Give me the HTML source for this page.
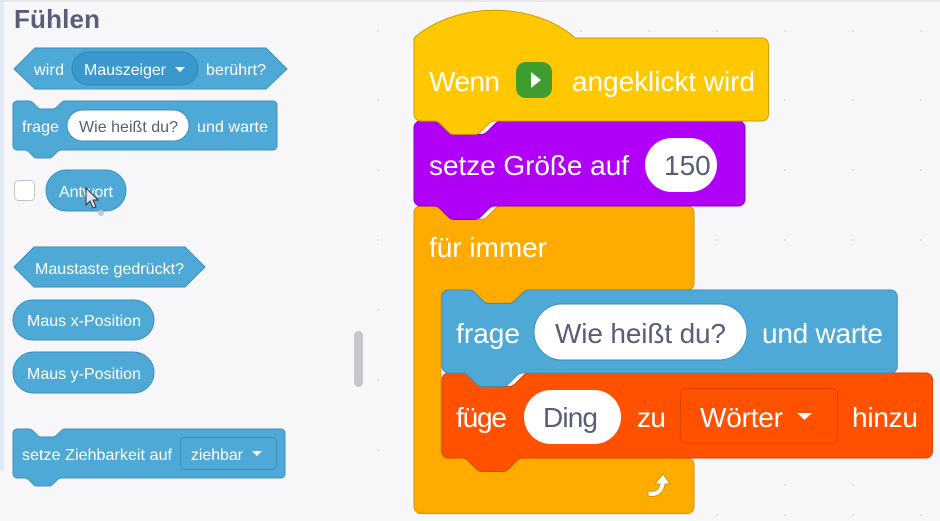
<!DOCTYPE html>
<html><head><meta charset="utf-8"><style>
html,body{margin:0;padding:0;width:940px;height:521px;overflow:hidden;background:#f7f7f9;}
svg{position:absolute;left:0;top:0}
text{font-family:"Liberation Sans",sans-serif;}
</style></head><body>
<svg width="940" height="521" viewBox="0 0 940 521">
<rect x="0" y="0" width="940" height="521" fill="#f7f7f9"/>
<rect x="0" y="0" width="940" height="2" fill="#e6e6ea"/>
<rect x="0" y="2" width="4" height="468" fill="#e1e9f4"/>
<rect x="354" y="331" width="9" height="56" rx="4.5" fill="#c6c6ca"/>
<text x="14" y="28" font-size="26" font-weight="bold" fill="#575e75" textLength="86">Fühlen</text>

<path d="M14,69 L35,48 H266 L287,69 L266,89 H35 Z" fill="#4fa9d6" stroke="#3d8fbd"/>
<text x="34" y="75" font-size="16" fill="#fff" textLength="30">wird</text>
<rect x="72" y="52" width="126" height="33" rx="16.5" fill="#3a98cc" stroke="#2f86b8"/>
<text x="84" y="75" font-size="16" fill="#fff" textLength="82">Mauszeiger</text>
<path d="M175,67 h10 l-5,5 z" fill="#fff"/>
<text x="206" y="75" font-size="16" fill="#fff" textLength="60">berührt?</text>

<g transform="translate(13,101)">
<path d="M0,4 A4,4 0 0 1 4,0 H16 c2,0 3,1 4,2 l4,4 c1,1 2,2 4,2 h12 c2,0 3,-1 4,-2 l4,-4 c1,-1 2,-2 4,-2 H260 a4,4 0 0 1 4,4 V45 a4,4 0 0 1 -4,4 H48 c-2,0 -3,1 -4,2 l-4,4 c-1,1 -2,2 -4,2 h-12 c-2,0 -3,-1 -4,-2 l-4,-4 c-1,-1 -2,-2 -4,-2 H4 a4,4 0 0 1 -4,-4 Z" fill="#4fa9d6" stroke="#3d8fbd"/>
</g>
<text x="22" y="132" font-size="16" fill="#fff" textLength="37">frage</text>
<rect x="67" y="110" width="122" height="31" rx="15.5" fill="#fff" stroke="#3d8fbd"/>
<text x="79" y="132" font-size="16" fill="#575e75" textLength="99">Wie heißt du?</text>
<text x="197" y="132" font-size="16" fill="#fff" textLength="71">und warte</text>

<rect x="14.5" y="180.5" width="20" height="20" rx="4" fill="#fff" stroke="#c4c4c8"/>
<rect x="46" y="170" width="80" height="41" rx="20.5" fill="#4fa9d6" stroke="#3d8fbd"/>
<text x="59" y="197" font-size="16" fill="#fff" textLength="54">Antwort</text>
<path d="M86,188 v17 l4,-4 l3,7 l3,-1 l-3,-7 l5,0 z" fill="#dfe6ee" stroke="#333" stroke-width="1"/>
<circle cx="101" cy="213" r="3" fill="#c8c8cc"/>

<path d="M14,267 L34,247 H185 L205,267 L185,287 H34 Z" fill="#4fa9d6" stroke="#3d8fbd"/>
<text x="35" y="274" font-size="16" fill="#fff" textLength="149">Maustaste gedrückt?</text>
<rect x="13" y="300" width="141" height="40" rx="20" fill="#4fa9d6" stroke="#3d8fbd"/>
<text x="27" y="326" font-size="16" fill="#fff" textLength="114">Maus x-Position</text>
<rect x="13" y="352" width="141" height="41" rx="20.5" fill="#4fa9d6" stroke="#3d8fbd"/>
<text x="27" y="379" font-size="16" fill="#fff" textLength="114">Maus y-Position</text>

<g transform="translate(13,429)">
<path d="M0,4 A4,4 0 0 1 4,0 H16 c2,0 3,1 4,2 l4,4 c1,1 2,2 4,2 h12 c2,0 3,-1 4,-2 l4,-4 c1,-1 2,-2 4,-2 H268 a4,4 0 0 1 4,4 V45 a4,4 0 0 1 -4,4 H48 c-2,0 -3,1 -4,2 l-4,4 c-1,1 -2,2 -4,2 h-12 c-2,0 -3,-1 -4,-2 l-4,-4 c-1,-1 -2,-2 -4,-2 H4 a4,4 0 0 1 -4,-4 Z" fill="#4fa9d6" stroke="#3d8fbd"/>
</g>
<text x="22" y="460" font-size="16" fill="#fff" textLength="150">setze Ziehbarkeit auf</text>
<rect x="180.5" y="437.5" width="96" height="32" rx="4" fill="#4fa9d6" stroke="#3a8fc0"/>
<text x="191" y="460" font-size="16" fill="#fff" textLength="52">ziehbar</text>
<path d="M252,451 h10 l-5,5 z" fill="#fff"/>

<g fill="#dcdce0">
<circle cx="581" cy="31" r="1"/><circle cx="649" cy="31" r="1"/><circle cx="717" cy="31" r="1"/><circle cx="785" cy="31" r="1"/><circle cx="853" cy="31" r="1"/><circle cx="921" cy="31" r="1"/>
<circle cx="785" cy="100" r="1"/><circle cx="853" cy="100" r="1"/><circle cx="921" cy="100" r="1"/>
<circle cx="785" cy="170" r="1"/><circle cx="853" cy="170" r="1"/><circle cx="921" cy="170" r="1"/>
<circle cx="717" cy="240" r="1"/><circle cx="785" cy="240" r="1"/><circle cx="853" cy="240" r="1"/><circle cx="921" cy="240" r="1"/>
<circle cx="378" cy="31" r="1"/><circle cx="378" cy="100" r="1"/><circle cx="378" cy="170" r="1"/><circle cx="378" cy="240" r="1"/><circle cx="378" cy="310" r="1"/><circle cx="378" cy="380" r="1"/><circle cx="378" cy="450" r="1"/>
<circle cx="717" cy="515" r="1"/><circle cx="785" cy="515" r="1"/><circle cx="853" cy="515" r="1"/><circle cx="921" cy="515" r="1"/><circle cx="785" cy="485" r="1"/><circle cx="853" cy="485" r="1"/>
</g>

<g transform="translate(414,206) scale(1.68)">
<path d="M0,4 a4,4 0 0 1 4,-4 H16 c2,0 3,1 4,2 l4,4 c1,1 2,2 4,2 h12 c2,0 3,-1 4,-2 l4,-4 c1,-1 2,-2 4,-2 H162.7 a4,4 0 0 1 4,4 V46 a4,4 0 0 1 -4,4 H68 c-2,0 -3,1 -4,2 l-4,4 c-1,1 -2,2 -4,2 h-12 c-2,0 -3,-1 -4,-2 l-4,-4 c-1,-1 -2,-2 -4,-2 H20 a4,4 0 0 0 -4,4 V146 a4,4 0 0 0 4,4 H162.7 a4,4 0 0 1 4,4 V179 a4,4 0 0 1 -4,4 H4 a4,4 0 0 1 -4,-4 Z" fill="#ffab00" stroke="#d99500" stroke-width="0.6"/>
</g>
<text x="429" y="257" font-size="28" fill="#fff" textLength="118">für immer</text>
<path d="M648,496 c9,2 16,-3 17,-12 l5,0 l-7,-10 l-8,10 l5,0 c-1,6 -5,8 -12,7 z" fill="#fff" stroke="#d99500" stroke-width="1"/>

<g transform="translate(414,121) scale(1.68)">
<path d="M0,4 A4,4 0 0 1 4,0 H16 c2,0 3,1 4,2 l4,4 c1,1 2,2 4,2 h12 c2,0 3,-1 4,-2 l4,-4 c1,-1 2,-2 4,-2 H193 a4,4 0 0 1 4,4 V46.6 a4,4 0 0 1 -4,4 H48 c-2,0 -3,1 -4,2 l-4,4 c-1,1 -2,2 -4,2 h-12 c-2,0 -3,-1 -4,-2 l-4,-4 c-1,-1 -2,-2 -4,-2 H4 a4,4 0 0 1 -4,-4 Z" fill="#b000f5" stroke="#8a00c4" stroke-width="0.6"/>
</g>
<text x="429" y="175" font-size="28" fill="#fff" textLength="200">setze Größe auf</text>
<rect x="645" y="138" width="72" height="54" rx="27" fill="#fff"/>
<text x="664" y="175" font-size="28" fill="#575e75">150</text>

<g transform="translate(414,38) scale(1.68)">
<path d="M0,0 c25,-22 71,-22 96,0 H207 a4,4 0 0 1 4,4 V45.4 a4,4 0 0 1 -4,4 H48 c-2,0 -3,1 -4,2 l-4,4 c-1,1 -2,2 -4,2 h-12 c-2,0 -3,-1 -4,-2 l-4,-4 c-1,-1 -2,-2 -4,-2 H4 a4,4 0 0 1 -4,-4 Z" fill="#ffc800" stroke="#cc9f00" stroke-width="0.6"/>
</g>
<text x="429" y="91" font-size="28" fill="#fff" textLength="71">Wenn</text>
<rect x="516" y="62" width="36" height="36" rx="10" fill="#3f9c2e"/>
<path d="M531,72 v16 l10,-8 z" fill="#fff"/>
<text x="572" y="91" font-size="28" fill="#fff" textLength="183">angeklickt wird</text>

<g transform="translate(442,373) scale(1.68)">
<path d="M0,4 A4,4 0 0 1 4,0 H16 c2,0 3,1 4,2 l4,4 c1,1 2,2 4,2 h12 c2,0 3,-1 4,-2 l4,-4 c1,-1 2,-2 4,-2 H288 a4,4 0 0 1 4,4 V46.6 a4,4 0 0 1 -4,4 H48 c-2,0 -3,1 -4,2 l-4,4 c-1,1 -2,2 -4,2 h-12 c-2,0 -3,-1 -4,-2 l-4,-4 c-1,-1 -2,-2 -4,-2 H4 a4,4 0 0 1 -4,-4 Z" fill="#ff5100" stroke="#d94400" stroke-width="0.6"/>
</g>
<text x="456" y="427" font-size="28" fill="#fff" textLength="51">füge</text>
<rect x="524" y="390" width="97" height="54" rx="27" fill="#fff"/>
<text x="543" y="427" font-size="28" fill="#575e75" textLength="55">Ding</text>
<text x="637" y="427" font-size="28" fill="#fff" textLength="29">zu</text>
<rect x="680.5" y="388.5" width="157" height="55" rx="5" fill="#ff5100" stroke="#de4500" stroke-width="1.2"/>
<text x="700" y="427" font-size="28" fill="#fff" textLength="83">Wörter</text>
<path d="M797,413 h15 l-7.5,7 z" fill="#fff"/>
<text x="852" y="427" font-size="28" fill="#fff" textLength="66">hinzu</text>

<g transform="translate(442,290) scale(1.68)">
<path d="M0,4 A4,4 0 0 1 4,0 H16 c2,0 3,1 4,2 l4,4 c1,1 2,2 4,2 h12 c2,0 3,-1 4,-2 l4,-4 c1,-1 2,-2 4,-2 H267 a4,4 0 0 1 4,4 V45.4 a4,4 0 0 1 -4,4 H48 c-2,0 -3,1 -4,2 l-4,4 c-1,1 -2,2 -4,2 h-12 c-2,0 -3,-1 -4,-2 l-4,-4 c-1,-1 -2,-2 -4,-2 H4 a4,4 0 0 1 -4,-4 Z" fill="#4fa9d6" stroke="#3d8fbd" stroke-width="0.6"/>
</g>
<text x="456" y="343" font-size="28" fill="#fff" textLength="64">frage</text>
<rect x="534" y="304" width="213" height="56" rx="28" fill="#fff" stroke="#3d8fbd"/>
<text x="555" y="343" font-size="28" fill="#575e75" textLength="171">Wie heißt du?</text>
<text x="762" y="343" font-size="28" fill="#fff" textLength="121">und warte</text>
</svg>
</body></html>
